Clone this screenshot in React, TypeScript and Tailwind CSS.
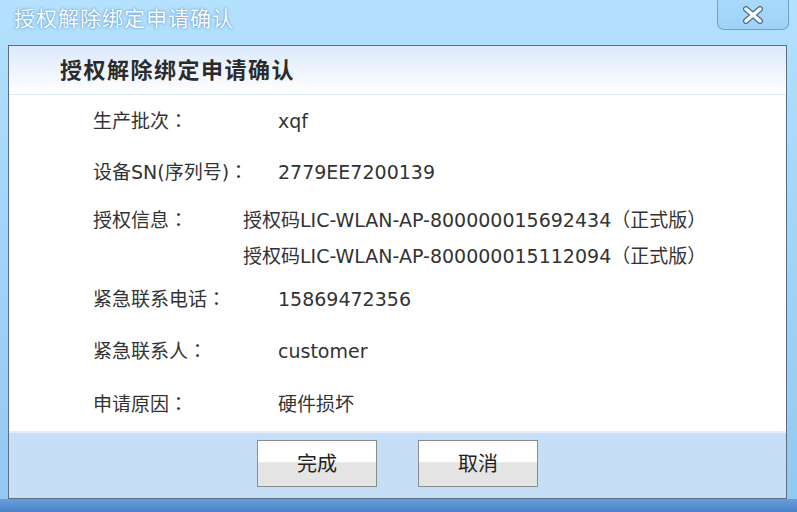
import React from 'react'

const font = { fontFamily: '"DejaVu Sans", "Noto Sans CJK SC", sans-serif' }

interface RowProps {
  label: string
  labelWidth: string
  className?: string
  children: React.ReactNode
}

// colon drawn centred in its cell, as in the original dialog
function Colon() {
  return (
    <span className="leading-[0]" style={{ fontFamily: '"Noto Sans CJK TC", sans-serif' }}>
      ：
    </span>
  )
}

function Row({ label, labelWidth, className, children }: RowProps) {
  return (
    <div className={`flex pl-[84px] text-[19px] leading-[24px] text-[#333] ${className ?? ''}`}>
      <div className={`${labelWidth} shrink-0`}>
        {label}
        <Colon />
      </div>
      <div>{children}</div>
    </div>
  )
}

function CloseIcon() {
  return (
    <svg width="22" height="18" viewBox="0 0 22 18">
      <path
        d="M4 3 L18 15 M18 3 L4 15"
        stroke="#4a6f96"
        strokeWidth="6"
        strokeLinecap="round"
      />
      <path
        d="M4 3 L18 15 M18 3 L4 15"
        stroke="#ffffff"
        strokeWidth="3.5"
        strokeLinecap="round"
      />
    </svg>
  )
}

function Button({ children }: { children: React.ReactNode }) {
  return (
    <button
      className={`
        flex h-[47px] w-[120px] items-center justify-center border border-[#8c8c8c]
        bg-[linear-gradient(to_bottom,#ffffff_0%,#ffffff_47%,#e4e4e4_48%,#e4e4e4_100%)]
        text-[20px] text-[#222]
      `}
    >
      {children}
    </button>
  )
}

export default function App() {
  return (
    <div
      className="flex h-[512px] w-[797px] flex-col overflow-hidden bg-[linear-gradient(to_bottom,#b4e1fd_0%,#a3d6fa_40%,#93c8f3_100%)]"
      style={font}
    >
      {/* title bar */}
      <div className="flex h-[45px] shrink-0 items-start justify-between">
        <div
          className="pl-[14px] pt-[5px] text-[21px] leading-[28px] tracking-[1px] text-white"
          style={{ textShadow: '0 0 3px rgba(90,150,210,0.9), 0 0 1px rgba(60,120,190,0.8)' }}
        >
          授权解除绑定申请确认
        </div>
        <div
          className={`
            mr-[8px] flex h-[30px] w-[72px] items-center justify-center rounded-b-[7px]
            border border-t-0 border-[#6f9fcf] bg-[linear-gradient(to_bottom,#a9dafc,#9fd2f7)]
          `}
        >
          <CloseIcon />
        </div>
      </div>

      {/* panel */}
      <div className="mx-[8px] flex h-[454px] w-[779px] flex-col border border-[#5d6e80] bg-white shadow-[inset_0_0_0_1px_#f4f9ff]">
        <div className="flex h-[49px] shrink-0 items-center border-b border-[#dbe8f8] bg-[linear-gradient(to_bottom,#dce9fb,#ffffff)] pl-[51px]">
          <span className="text-[22px] font-bold tracking-[1.5px] text-[#2b2b2b]">授权解除绑定申请确认</span>
        </div>

        <div className="flex flex-1 flex-col pt-[14px]">
          <Row label="生产批次" labelWidth="w-[185px]">xqf</Row>
          <Row label="设备SN(序列号)" labelWidth="w-[185px]" className="mt-[27px]">2779EE7200139</Row>
          <Row label="授权信息" labelWidth="w-[150px]" className="mt-[18px] leading-[36px]">
            <div>授权码LIC-WLAN-AP-800000015692434（正式版）</div>
            <div>授权码LIC-WLAN-AP-800000015112094（正式版）</div>
          </Row>
          <Row label="紧急联系电话" labelWidth="w-[185px]" className="mt-[13px]">15869472356</Row>
          <Row label="紧急联系人" labelWidth="w-[185px]" className="mt-[28px]">customer</Row>
          <Row label="申请原因" labelWidth="w-[185px]" className="mt-[29px]">硬件损坏</Row>
        </div>

        <div className="flex h-[67px] shrink-0 items-center justify-center gap-[41px] border-t-2 border-[#e4effb] bg-[#c6def6] pb-[4px]">
          <Button>完成</Button>
          <Button>取消</Button>
        </div>
      </div>

      <div className="mt-auto h-[13px] shrink-0 bg-[linear-gradient(to_bottom,#6a9edb,#4a83c8)]" />
    </div>
  )
}
